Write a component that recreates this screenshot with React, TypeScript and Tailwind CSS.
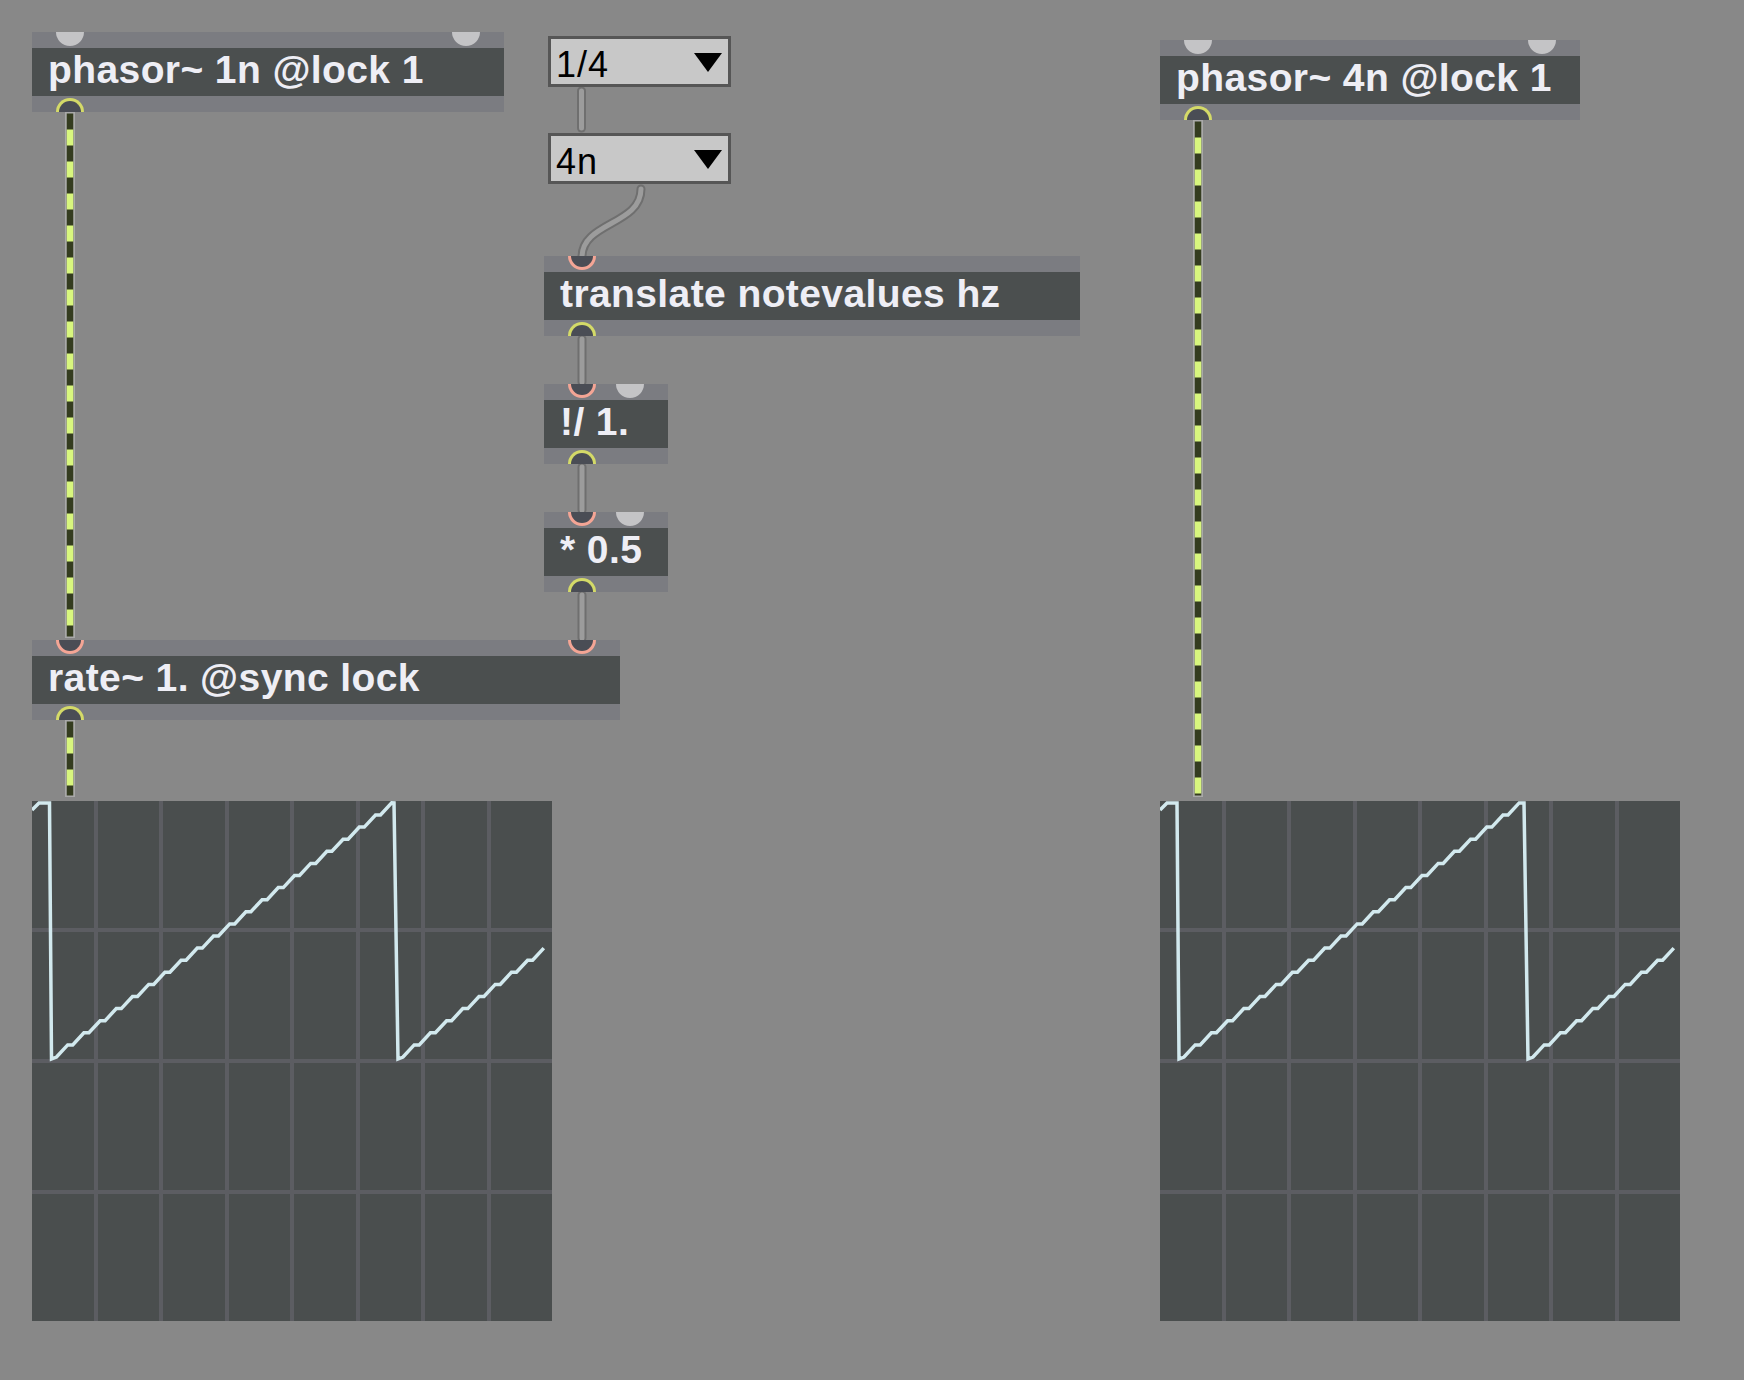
import React from "react"

type Inlet = "cold" | "hot"

const objText =
    "font-['Liberation_Sans',Arial,sans-serif] font-bold text-[39px] leading-[43px] tracking-[0.4px] text-[#eeeef5] whitespace-nowrap"

function Inlets({ inlets }: { inlets: Inlet[] }) {
    return (
        <div className="flex h-[16px] justify-between bg-[#7b7c81] px-[24px]">
            {inlets.map((kind, i) =>
                kind === "hot" ? (
                    <div
                        key={i}
                        className="h-[14px] w-[28px] rounded-b-full border-[3px] border-t-0 border-[#f4a595] bg-[#4a4d55]"
                    />
                ) : (
                    <div key={i} className="h-[14px] w-[28px] rounded-b-full bg-[#c4c4c6]" />
                )
            )}
        </div>
    )
}

function Outlet() {
    return (
        <div className="flex h-[16px] items-end bg-[#7b7c81] px-[24px]">
            <div className="h-[14px] w-[28px] rounded-t-full border-[3px] border-b-0 border-[#d4da68] bg-[#4a4d55]" />
        </div>
    )
}

// a max object box: inlet strip, text body, outlet strip
function MaxObject({ text, inlets, className }: { text: string; inlets: Inlet[]; className: string }) {
    return (
        <div className={`absolute flex flex-col ${className}`}>
            <Inlets inlets={inlets} />
            <div className="h-[48px] bg-[#4b4f4f] pl-[16px]">
                <span className={objText}>{text}</span>
            </div>
            <Outlet />
        </div>
    )
}

function Umenu({ label, className }: { label: string; className: string }) {
    return (
        <div
            className={`absolute flex h-[51px] w-[183px] items-start justify-between overflow-hidden border-[3px] border-[#565656] bg-[#c8c8c8] pl-[5px] pr-[6px] ${className}`}
        >
            <span className="pt-[4px] font-['Liberation_Sans',Arial,sans-serif] text-[36px] leading-[44px] tracking-[1px] text-black">
                {label}
            </span>
            <svg className="mt-[14px]" width="28" height="19" viewBox="0 0 28 19">
                <polygon points="0,0 28,0 14,19" fill="#000" />
            </svg>
        </div>
    )
}

// phasor staircase drawn by the scope
function wavePath(drop1: number, drop2: number) {
    const pts: [number, number][] = [
        [0, 9],
        [7, 2],
        [drop1 - 2, 2],
        [drop1, 258],
    ]
    const dx = 16.2
    const dy = 12.1
    const flat = 5
    const ramp = (start: number, steps: number) => {
        let x = start
        let y = 256
        for (let i = 0; i < steps; i++) {
            pts.push([x + flat, y])
            pts.push([x + dx, y - dy])
            x += dx
            y -= dy
        }
    }
    ramp(drop1, 21)
    pts.push([drop2 - 4, 2])
    pts.push([drop2, 258])
    ramp(drop2, 9)
    return "M" + pts.map(([x, y]) => `${x.toFixed(1)},${y.toFixed(1)}`).join(" L")
}

function Scope({ className, drop1, drop2 }: { className: string; drop1: number; drop2: number }) {
    return (
        <div className={`absolute h-[520px] w-[520px] ${className}`}>
            <div className="grid h-full w-full grid-cols-8 grid-rows-4 gap-[4px] bg-[#5c5d62]">
                {Array.from({ length: 32 }).map((_, i) => (
                    <div key={i} className="bg-[#4a4e4e]" />
                ))}
            </div>
            <svg className="absolute inset-0" width="520" height="520" viewBox="0 0 520 520">
                <path
                    d={wavePath(drop1, drop2)}
                    fill="none"
                    stroke="#d2e9ee"
                    strokeWidth="3.5"
                    strokeLinejoin="miter"
                />
            </svg>
        </div>
    )
}

function SignalCord({ x, y1, y2 }: { x: number; y1: number; y2: number }) {
    return (
        <g>
            <line x1={x} y1={y1} x2={x} y2={y2} stroke="#a9a9a9" strokeWidth="10" />
            <line x1={x} y1={y1 + 1.5} x2={x} y2={y2 - 1.5} stroke="#343c1f" strokeWidth="6.5" />
            <line
                x1={x}
                y1={y1 + 1.5}
                x2={x}
                y2={y2 - 1.5}
                stroke="#d8f67e"
                strokeWidth="6.5"
                strokeDasharray="16 16"
                strokeDashoffset="16"
            />
        </g>
    )
}

function Cord({ d }: { d: string }) {
    return (
        <g fill="none" strokeLinecap="round">
            <path d={d} stroke="#6f6f6f" strokeWidth="9" />
            <path d={d} stroke="#9c9c9c" strokeWidth="5" />
        </g>
    )
}

export default function App() {
    return (
        <div className="relative h-[1380px] w-[1744px] overflow-hidden bg-[#888888]">
            {/* patch cords */}
            <svg className="absolute inset-0" width="1744" height="1380" viewBox="0 0 1744 1380">
                <Cord d="M581.5,91 L581.5,128" />
                <Cord d="M641,189 C641,225 582,222 582,257" />
                <Cord d="M582,339 L582,382" />
                <Cord d="M582,467 L582,510" />
                <Cord d="M582,595 L582,638" />
                <SignalCord x={70} y1={112} y2={638} />
                <SignalCord x={70} y1={720} y2={797} />
                <SignalCord x={1198} y1={120} y2={797} />
            </svg>

            <MaxObject text="phasor~ 1n @lock 1" inlets={["cold", "cold"]} className="left-[32px] top-[32px] w-[472px]" />
            <Umenu label="1/4" className="left-[548px] top-[36px]" />
            <Umenu label="4n" className="left-[548px] top-[133px]" />
            <MaxObject text="translate notevalues hz" inlets={["hot"]} className="left-[544px] top-[256px] w-[536px]" />
            <MaxObject text="!/ 1." inlets={["hot", "cold"]} className="left-[544px] top-[384px] w-[124px]" />
            <MaxObject text="* 0.5" inlets={["hot", "cold"]} className="left-[544px] top-[512px] w-[124px]" />
            <MaxObject text="rate~ 1. @sync lock" inlets={["hot", "hot"]} className="left-[32px] top-[640px] w-[588px]" />
            <MaxObject text="phasor~ 4n @lock 1" inlets={["cold", "cold"]} className="left-[1160px] top-[40px] w-[420px]" />

            <Scope className="left-[32px] top-[801px]" drop1={19.5} drop2={366} />
            <Scope className="left-[1160px] top-[801px]" drop1={19} drop2={368} />
        </div>
    )
}
